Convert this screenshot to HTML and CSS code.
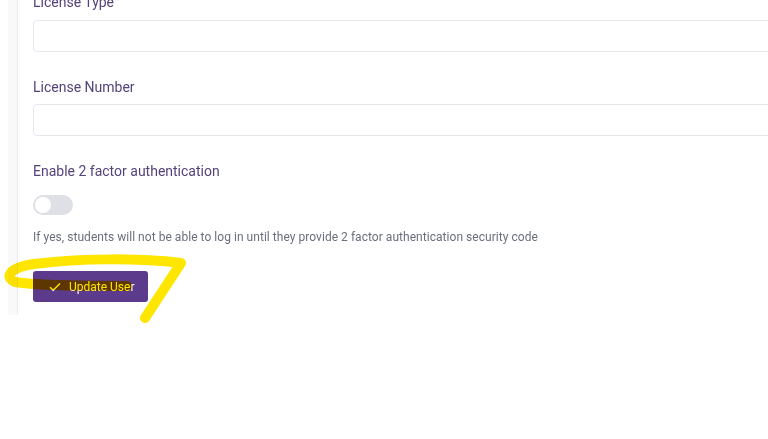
FILE: index.html
```html
<!DOCTYPE html>
<html lang="en">
<head>
    <meta charset="UTF-8">
    <meta name="viewport" content="width=device-width, initial-scale=1.0">
    <title>Edit User</title>
    <link rel="stylesheet" href="styles.css">
</head>
<body>
    <div class="shell">
        <div class="card">
            <form class="user_form">
                <div class="field">
                    <label for="licenseType">License Type</label>
                    <input type="text" id="licenseType" class="text_input">
                </div>
                <div class="field">
                    <label for="licenseNumber">License Number</label>
                    <input type="text" id="licenseNumber" class="text_input">
                </div>
                <div class="field">
                    <label for="twoFactor">Enable 2 factor authentication</label>
                    <span class="toggle"><span class="knob"></span></span>
                    <p class="help">If yes, students will not be able to log in until they provide 2 factor authentication security code</p>
                </div>
                <button type="button" class="btn_submit">
                    <svg class="check" width="12" height="10" viewBox="0 0 12 10"><path d="M1 5.2 L4.2 8.3 L11 1.6" fill="none" stroke="#fff" stroke-width="1.4"/></svg>
                    Update User
                </button>
            </form>
        </div>
    </div>
    <svg class="marker" width="768" height="439" viewBox="0 0 768 439">
        <path d="M127 286 C 95 285, 45 287, 15 282 C 5 278, 7 268, 34 264 C 80 258, 140 258, 181 263 L 145 318" fill="none" stroke="#ffe600" stroke-width="10" stroke-linecap="round" stroke-linejoin="round"/>
    </svg>
</body>
</html>
```
FILE: styles.css
```css
body{
    margin: 0;
    background: #fff;
    font-family: Roboto, "Liberation Sans", sans-serif;
}
.shell{
    margin-left: 8px;
    padding-left: 9px;
    height: 315px;
    background: #f9f9fa;
}
.card{
    height: 100%;
    background: #fff;
    border-left: 1px solid #ebebef;
    padding-left: 15px;
    overflow: hidden;
}
.user_form{
    width: 780px;
    margin-top: -8px;
}
.field{
    margin-bottom: 25px;
}
.field label{
    display: block;
    font-size: 14px;
    line-height: 20px;
    color: #54437a;
    margin-bottom: 8px;
}
.field .text_input{
    display: block;
    box-sizing: border-box;
    width: 100%;
    height: 32px;
    border: 1px solid #e7e5ee;
    border-radius: 4px;
    background: #fff;
}
.field label[for=licenseNumber]{
    margin-bottom: 7px;
}
.field label[for=twoFactor]{
    margin-bottom: 14px;
}
.toggle{
    display: block;
    position: relative;
    width: 40px;
    height: 20px;
    border-radius: 10px;
    background: #dfe0e6;
}
.toggle .knob{
    position: absolute;
    left: 2px;
    top: 2px;
    width: 16px;
    height: 16px;
    border-radius: 50%;
    background: #fff;
}
.help{
    margin: 13px 0 0;
    font-size: 12px;
    line-height: 18px;
    letter-spacing: 0.04px;
    color: #6b6e7d;
}
.btn_submit{
    display: flex;
    align-items: center;
    gap: 8px;
    width: 115px;
    height: 31px;
    padding: 0 0 0 16px;
    border: none;
    border-radius: 3px;
    background: #5d3b8c;
    color: #fff;
    font-family: Roboto, "Liberation Sans", sans-serif;
    font-size: 12px;
}
.marker{
    position: absolute;
    left: 0;
    top: 0;
    mix-blend-mode: multiply;
    pointer-events: none;
}
```
